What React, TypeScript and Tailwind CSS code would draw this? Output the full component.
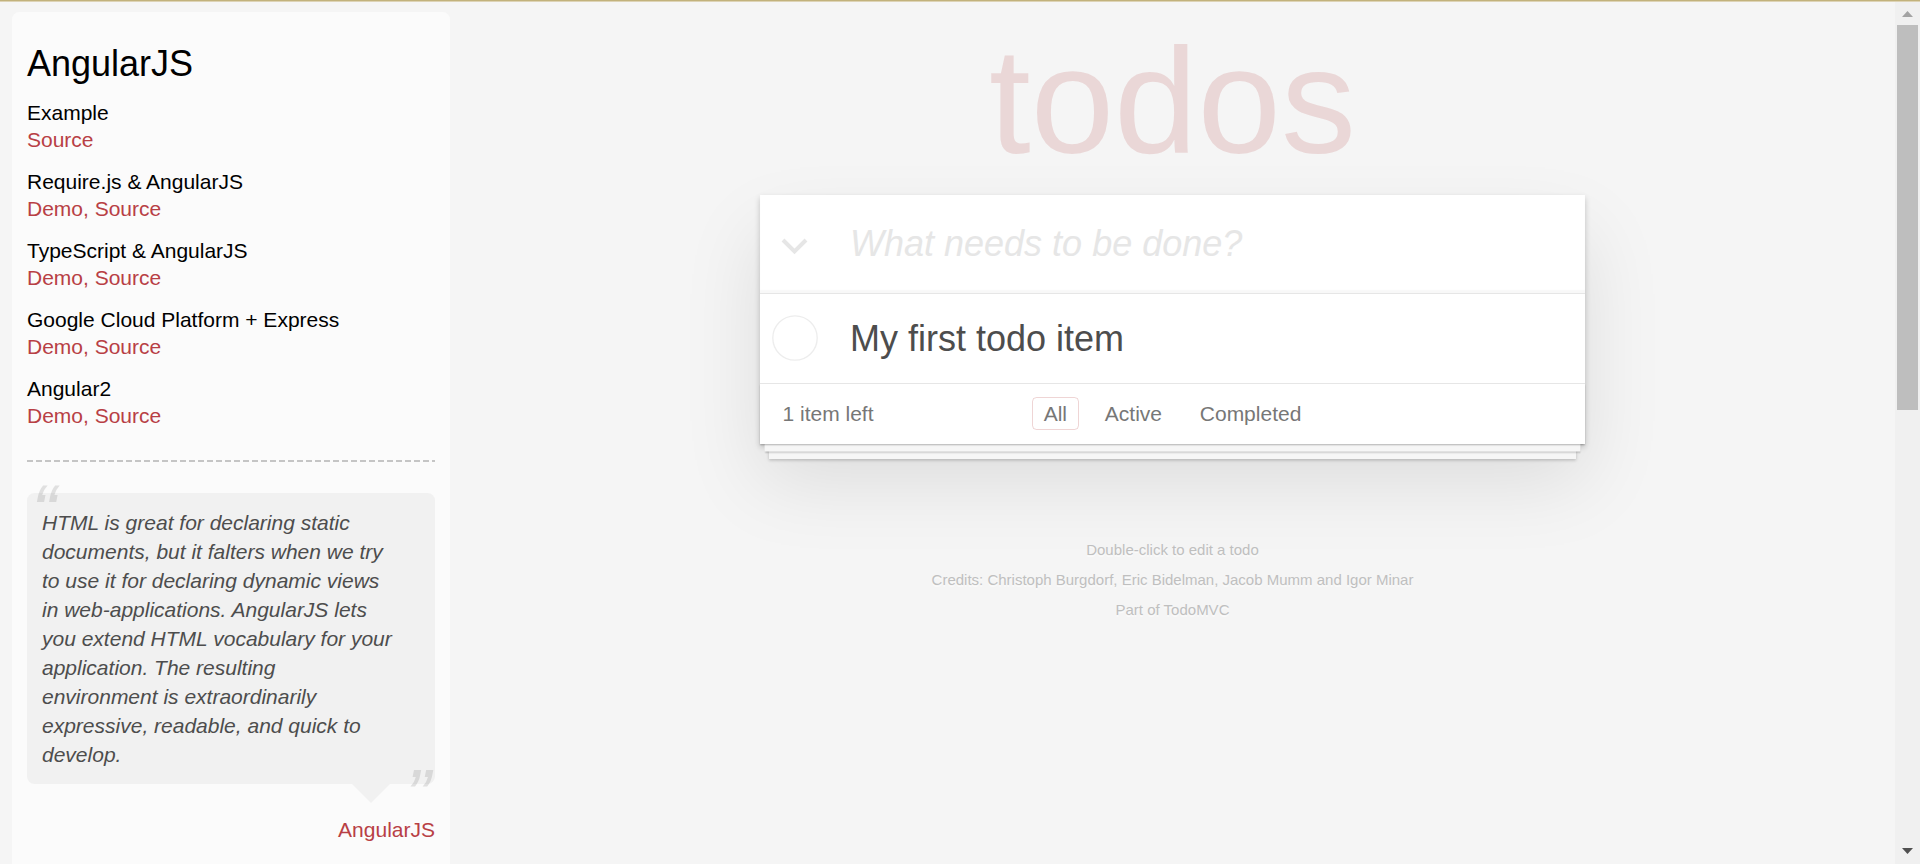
import React from "react";

const items: { title: string; links: string }[] = [
  { title: "Example", links: "Source" },
  { title: "Require.js & AngularJS", links: "Demo, Source" },
  { title: "TypeScript & AngularJS", links: "Demo, Source" },
  { title: "Google Cloud Platform + Express", links: "Demo, Source" },
  { title: "Angular2", links: "Demo, Source" },
];

const quoteLines = [
  "HTML is great for declaring static",
  "documents, but it falters when we try",
  "to use it for declaring dynamic views",
  "in web-applications. AngularJS lets",
  "you extend HTML vocabulary for your",
  "application. The resulting",
  "environment is extraordinarily",
  "expressive, readable, and quick to",
  "develop.",
];

function Sidebar() {
  return (
    <aside className="ml-[12px] mt-[10px] w-[438px] shrink-0 self-stretch rounded-t-[7.5px] bg-[#fbfbfb] px-[15px] pt-[15px]">
      <h3 className="mt-[15px] text-[36px] leading-[43.2px] text-black">AngularJS</h3>
      {items.map((it) => (
        <div key={it.title} className="mt-[15px]">
          <h5 className="text-[21px] leading-[25px] text-black">{it.title}</h5>
          <p className="text-[21px] leading-[29px] text-[#b83f45]">{it.links}</p>
        </div>
      ))}
      <div className="mt-[30px] h-[2px] bg-[repeating-linear-gradient(90deg,#c5c5c5_0px,#c5c5c5_6px,transparent_6px,transparent_9px)]" />
      <blockquote className="relative mt-[31px] rounded-[7.5px] bg-[#f1f1f1] p-[15px]">
        <span className="absolute left-[4.5px] top-[-19.5px] text-[75px] italic leading-[75px] text-[#4d4d4d] opacity-[0.15]">
          “
        </span>
        <p className="whitespace-nowrap text-[21px] italic leading-[29px] text-[#4d4d4d]">
          {quoteLines.map((l, i) => (
            <React.Fragment key={i}>
              {l}
              {i < quoteLines.length - 1 && <br />}
            </React.Fragment>
          ))}
        </p>
        <span className="absolute right-[4.5px] top-[265px] text-[75px] italic leading-[75px] text-[#4d4d4d] opacity-[0.15]">
          ”
        </span>
        <span className="absolute right-[45px] top-full h-0 w-0 border-[19.5px] border-transparent border-t-[#f1f1f1]" />
      </blockquote>
      <div className="mt-[31px] text-right text-[21px] leading-[29.4px] text-[#b83f45]">AngularJS</div>
    </aside>
  );
}

function TodoApp() {
  return (
    <main className="min-w-0 flex-1">
      <div className="mx-auto w-[825px]">
        <h1 className="mt-[24px] text-center text-[150px] font-thin leading-[150px] text-[rgba(175,47,47,0.15)]">
          todos
        </h1>
        <section className="mt-[19px] bg-white shadow-[0_3px_6px_0_rgba(0,0,0,0.2),0_37.5px_75px_0_rgba(0,0,0,0.1)]">
          <div className="flex h-[98.4px] items-center shadow-[inset_0_-3px_1.5px_rgba(0,0,0,0.03)]">
            <div className="flex w-[90px] shrink-0 pl-[21px] pt-[4px]">
              <svg width="27" height="17" viewBox="0 0 27 17">
                <polyline points="2,2 13.5,13.5 25,2" fill="none" stroke="#e6e6e6" strokeWidth="4" />
              </svg>
            </div>
            <div className="text-[36px] italic leading-[50.4px] text-[#e6e6e6]">What needs to be done?</div>
          </div>
          <ul className="border-t-[1.5px] border-[#e6e6e6]">
            <li className="flex h-[88.2px] items-center">
              <div className="flex w-[90px] shrink-0 pl-[12px]">
                <svg width="46" height="46" viewBox="0 0 46 46">
                  <circle cx="23" cy="23" r="22.2" fill="none" stroke="#ededed" strokeWidth="1.33" />
                </svg>
              </div>
              <label className="text-[36px] leading-[43.2px] text-[#4d4d4d]">My first todo item</label>
            </li>
          </ul>
          <footer className="grid h-[61.5px] grid-cols-[1fr_auto_1fr] items-center border-t-[1.5px] border-[#e6e6e6] px-[22.5px] text-[21px] text-[#777777] shadow-[0_1.5px_1.5px_rgba(0,0,0,0.2),0_12px_0_-4.5px_#f6f6f6,0_13.5px_1.5px_-4.5px_rgba(0,0,0,0.2),0_24px_0_-9px_#f6f6f6,0_25.5px_3px_-9px_rgba(0,0,0,0.2)]">
            <span className="leading-[29.4px]">1 item left</span>
            <ul className="flex gap-[5.8px]">
              <li>
                <a className="mx-[4.5px] flex h-[33px] items-center rounded-[4.5px] border-[1.5px] border-[rgba(175,47,47,0.2)] px-[10.5px]">
                  All
                </a>
              </li>
              <li>
                <a className="mx-[4.5px] flex h-[33px] items-center rounded-[4.5px] border-[1.5px] border-transparent px-[10.5px]">
                  Active
                </a>
              </li>
              <li>
                <a className="mx-[4.5px] flex h-[33px] items-center rounded-[4.5px] border-[1.5px] border-transparent px-[10.5px]">
                  Completed
                </a>
              </li>
            </ul>
            <span />
          </footer>
        </section>
        <div className="mt-[98px] text-center text-[15px] leading-[15px] text-[#bfbfbf] [text-shadow:0_1.5px_0_rgba(255,255,255,0.5)]">
          <p>Double-click to edit a todo</p>
          <p className="mt-[15px]">Credits: Christoph Burgdorf, Eric Bidelman, Jacob Mumm and Igor Minar</p>
          <p className="mt-[15px]">Part of TodoMVC</p>
        </div>
      </div>
    </main>
  );
}

function Scrollbar() {
  return (
    <div className="flex w-[25px] shrink-0 flex-col bg-[#f0f0f0]">
      <div className="flex h-[23px] items-center justify-center">
        <svg width="11" height="6" viewBox="0 0 11 6">
          <polygon points="5.5,0 11,6 0,6" fill="#a3a3a3" />
        </svg>
      </div>
      <div className="ml-[2px] h-[385px] w-[21px] bg-[#bebebe]" />
      <div className="flex-1" />
      <div className="flex h-[23px] items-center justify-center pb-[3px]">
        <svg width="11" height="6" viewBox="0 0 11 6">
          <polygon points="0,0 11,0 5.5,6" fill="#505050" />
        </svg>
      </div>
    </div>
  );
}

export default function App() {
  return (
    <div className="flex h-[864px] w-full flex-col overflow-hidden bg-[#f5f5f5] font-['Liberation_Sans',Arial,sans-serif] text-[#4d4d4d]">
      <div className="h-[1px] shrink-0 bg-[#c2b27c]" />
      <div className="h-[1px] shrink-0 bg-[#ddd3b5]" />
      <div className="flex min-h-0 flex-1">
        <Sidebar />
        <TodoApp />
        <Scrollbar />
      </div>
    </div>
  );
}
